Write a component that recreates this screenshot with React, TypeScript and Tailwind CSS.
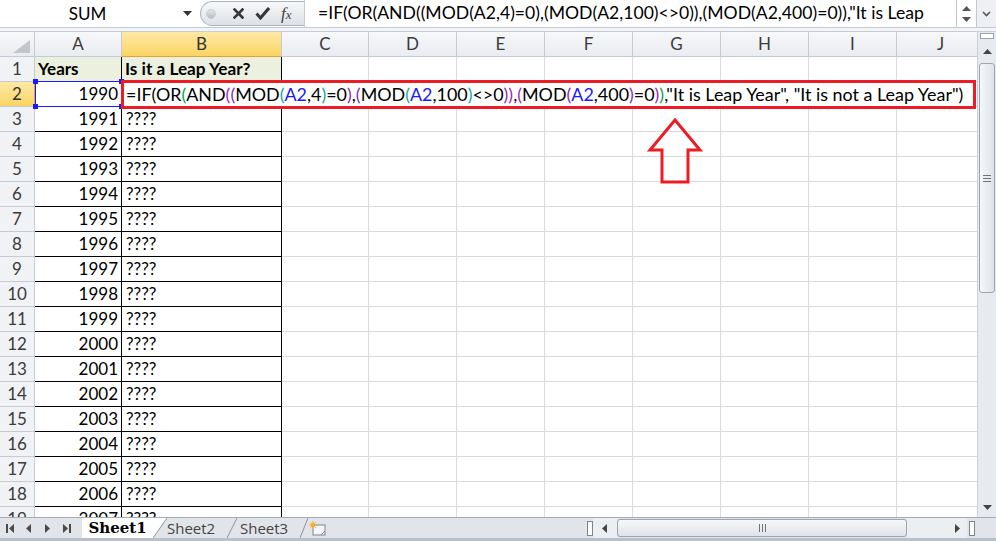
import React from 'react';

type Dir = 'up' | 'down' | 'left' | 'right';

const Tri = ({ dir, className }: { dir: Dir; className?: string }) => {
  const vertical = dir === 'up' || dir === 'down';
  const w = vertical ? 9 : 5;
  const h = vertical ? 5 : 9;
  const pts = {
    up: '0,5 4.5,0 9,5',
    down: '0,0 9,0 4.5,5',
    left: '5,0 5,9 0,4.5',
    right: '0,0 0,9 5,4.5',
  }[dir];
  return (
    <svg width={w} height={h} viewBox={`0 0 ${w} ${h}`} className={className}>
      <polygon points={pts} fill="currentColor" />
    </svg>
  );
};

const cols = [
  { l: 'A', w: 'w-[87px]' },
  { l: 'B', w: 'w-[160px]' },
  { l: 'C', w: 'w-[87px]' },
  { l: 'D', w: 'w-[88px]' },
  { l: 'E', w: 'w-[88px]' },
  { l: 'F', w: 'w-[88px]' },
  { l: 'G', w: 'w-[88px]' },
  { l: 'H', w: 'w-[88px]' },
  { l: 'I', w: 'w-[88px]' },
  { l: 'J', w: 'w-[88px]' },
];

const K = '#000000';
const GRN = '#00a651';
const PUR = '#a21cc4';
const PUR2 = '#8a2bb0';
const TEAL = '#12a89a';
const REF = '#1a1aff';

const formula: [string, string][] = [
  ['=IF(OR', K],
  ['(', GRN],
  ['AND', K],
  ['(', PUR],
  ['(', PUR2],
  ['MOD', K],
  ['(', TEAL],
  ['A2', REF],
  [',4', K],
  [')', TEAL],
  ['=0', K],
  [')', PUR2],
  [',', K],
  ['(', PUR2],
  ['MOD', K],
  ['(', TEAL],
  ['A2', REF],
  [',100', K],
  [')', TEAL],
  ['<>0', K],
  [')', PUR2],
  [')', PUR],
  [',', K],
  ['(', PUR],
  ['MOD', K],
  ['(', PUR2],
  ['A2', REF],
  [',400', K],
  [')', PUR2],
  ['=0', K],
  [')', PUR],
  [')', GRN],
  [',"It is Leap Year", "It is not a Leap Year")', K],
];

const years = Array.from({ length: 18 }, (_, i) => 1990 + i);

function FormulaBar() {
  return (
    <div className="flex h-[28px] bg-white border-b border-[#c3c9d1]">
      <div className="w-[200px] shrink-0 flex items-center">
        <div className="w-[175px] text-center text-[17px] text-black">SUM</div>
        <Tri dir="down" className="ml-[8px] text-[#333]" />
      </div>
      <div className="w-[104px] shrink-0 my-[1px] rounded-l-full border border-r-0 border-[#a9b2bd] bg-linear-to-b from-[#f7f8fa] to-[#dde1e6] flex items-center">
        <div className="ml-[5px] w-[10px] h-[10px] rounded-full bg-linear-to-b from-[#e4e6e9] to-[#b9bdc3] border border-[#c9cdd2]" />
        <svg width="11" height="11" viewBox="0 0 11 11" className="ml-[17px]">
          <path d="M1.5 1.5 L9.5 9.5 M9.5 1.5 L1.5 9.5" stroke="#363636" strokeWidth="2.6" strokeLinecap="square" />
        </svg>
        <svg width="15" height="13" viewBox="0 0 15 13" className="ml-[11px]">
          <path d="M1.5 6.5 L5.5 11 L14 1" stroke="#363636" strokeWidth="3" fill="none" />
        </svg>
        <div className="ml-[11px] text-[17px] leading-none text-[#444] font-['Liberation_Serif',serif] italic">
          f<span className="text-[13px]">x</span>
        </div>
      </div>
      <div className="flex-1 min-w-0 border-l border-[#c3c9d1] flex items-center pl-[13px] text-[17.6px] text-black whitespace-nowrap overflow-hidden">
        =IF(OR(AND((MOD(A2,4)=0),(MOD(A2,100)&lt;&gt;0)),(MOD(A2,400)=0)),"It is Leap
      </div>
      <div className="w-[20px] shrink-0 border-l border-[#c3c9d1] flex flex-col items-center justify-center gap-[6px] text-[#555]">
        <Tri dir="up" />
        <Tri dir="down" />
      </div>
      <div className="w-[20px] shrink-0 border-l border-[#c3c9d1] bg-[#eef0f3] flex items-center justify-center">
        <svg width="9" height="6" viewBox="0 0 9 6">
          <path d="M1 1 L4.5 4.5 L8 1" stroke="#555" strokeWidth="1.6" fill="none" />
        </svg>
      </div>
    </div>
  );
}

function HeaderRow() {
  return (
    <div className="flex h-[25px] shrink-0">
      <div className="w-[35px] shrink-0 relative border-r border-b border-[#c5cbd3] bg-linear-to-b from-[#f7f8fa] to-[#e9ecf0]">
        <svg width="17" height="13" viewBox="0 0 17 13" className="absolute right-[4px] bottom-[3px]">
          <polygon points="17,0 17,13 0,13" fill="#c2c6cc" />
        </svg>
      </div>
      {cols.map((c) => (
        <div
          key={c.l}
          className={
            c.l === 'B'
              ? `${c.w} shrink-0 flex items-center justify-center border-r border-b border-[#c5cbd3] border-b-[#e3a03c] bg-linear-to-b from-[#fde9a4] to-[#fbd462] text-[17px] text-[#333]`
              : `${c.w} shrink-0 flex items-center justify-center border-r border-b border-[#c5cbd3] bg-linear-to-b from-[#f7f8fa] to-[#e9ecf0] text-[17px] text-[#3b3b3b]`
          }
        >
          {c.l}
        </div>
      ))}
    </div>
  );
}

function DataRow({ r }: { r: number }) {
  const selected = r === 2;
  const year = r >= 2 ? String(years[r - 2]) : 'Years';
  const b = r === 1 ? 'Is it a Leap Year?' : r === 2 ? '' : '????';
  return (
    <div className="flex h-[25px] shrink-0">
      <div
        className={
          selected
            ? 'w-[35px] shrink-0 flex items-center justify-center border-r border-b border-[#c5cbd3] border-r-[#e3a03c] bg-linear-to-b from-[#fde9a4] to-[#fbd462] text-[17px] text-[#333]'
            : 'w-[35px] shrink-0 flex items-center justify-center border-r border-b border-[#c5cbd3] bg-[#f0f2f5] text-[17px] text-[#3b3b3b]'
        }
      >
        {r}
      </div>
      <div
        className={
          r === 1
            ? 'w-[87px] shrink-0 flex items-center border-r border-b border-black bg-[#ebf1de] pl-[3px] font-bold text-[17px]'
            : 'w-[87px] shrink-0 flex items-center justify-end border-r border-b border-black pr-[3px] text-[17px]'
        }
      >
        {year}
      </div>
      <div
        className={
          r === 1
            ? 'w-[160px] shrink-0 flex items-center border-r border-b border-black bg-[#ebf1de] pl-[3px] font-bold text-[17.2px] whitespace-nowrap overflow-hidden'
            : 'w-[160px] shrink-0 flex items-center border-r border-b border-black pl-[4px] text-[17px]'
        }
      >
        {b}
      </div>
      {cols.slice(2).map((c) => (
        <div key={c.l} className={`${c.w} shrink-0 border-r border-b border-[#d9dcdf]`} />
      ))}
    </div>
  );
}

function VScroll() {
  return (
    <div className="w-[19px] shrink-0 flex flex-col items-stretch bg-[#e7eaee] border-l border-[#cdd2d8]">
      <div className="h-[6px] mx-[2px] mt-[1px] border border-[#9aa3ae] bg-white" />
      <div className="h-[24px] flex items-center justify-center text-[#444]">
        <Tri dir="up" />
      </div>
      <div className="h-[230px] mx-[1px] rounded-[3px] border border-[#9ca5b0] bg-linear-to-r from-[#f6f7f9] to-[#dfe3e8] flex flex-col items-center justify-center gap-[2px]">
        <div className="w-[8px] h-[1px] bg-[#6b737d]" />
        <div className="w-[8px] h-[1px] bg-[#6b737d]" />
        <div className="w-[8px] h-[1px] bg-[#6b737d]" />
      </div>
      <div className="flex-1" />
      <div className="h-[20px] flex items-center justify-center text-[#444]">
        <Tri dir="down" />
      </div>
    </div>
  );
}

function Slant({ w, fill }: { w: number; fill?: boolean }) {
  return (
    <svg width={w} height="20" viewBox={`0 0 ${w} 20`} className="shrink-0">
      {fill && <polygon points={`0,0 ${w},0 0,20`} fill="#ffffff" />}
      <line x1="0" y1="20" x2={w} y2="0" stroke="#8a939e" strokeWidth="1" />
    </svg>
  );
}

function TabBar() {
  return (
    <div className="flex h-[24px] bg-[#e1e5ea] border-t border-t-[#a3acb7] border-b-[3px] border-b-[#b9c0c9]">
      <div className="w-[82px] shrink-0 flex items-center text-[#4a4a4a]">
        <div className="w-[19px] flex items-center justify-center gap-[1px]">
          <div className="w-[2px] h-[9px] bg-[#4a4a4a]" />
          <Tri dir="left" />
        </div>
        <div className="w-[19px] flex items-center justify-center">
          <Tri dir="left" />
        </div>
        <div className="w-[19px] flex items-center justify-center">
          <Tri dir="right" />
        </div>
        <div className="w-[19px] flex items-center justify-center gap-[1px]">
          <Tri dir="right" />
          <div className="w-[2px] h-[9px] bg-[#4a4a4a]" />
        </div>
      </div>
      <div className="w-[71px] shrink-0 bg-white flex items-center justify-center pt-[1px] text-[15px] font-bold text-black font-['DejaVu_Serif',serif]">
        Sheet1
      </div>
      <Slant w={14} fill />
      <div className="w-[60px] shrink-0 flex items-center pt-[1px] text-[15px] text-[#444] font-['Open_Sans',sans-serif]">Sheet2</div>
      <Slant w={10} />
      <div className="w-[63px] shrink-0 flex items-center pl-[3px] pt-[1px] text-[15px] text-[#444] font-['Open_Sans',sans-serif]">Sheet3</div>
      <Slant w={8} />
      <div className="w-[19px] shrink-0 flex items-center justify-center">
        <svg width="17" height="15" viewBox="0 0 17 15">
          <rect x="4" y="4" width="12" height="10" fill="#f4f6f8" stroke="#7c8692" />
          <path d="M12 14 L16 10" stroke="#7c8692" />
          <circle cx="4" cy="4" r="2.2" fill="#f7a21b" />
          <path d="M4 0 V8 M0 4 H8 M1.2 1.2 L6.8 6.8 M6.8 1.2 L1.2 6.8" stroke="#f7b236" strokeWidth="1" />
        </svg>
      </div>
      <div className="w-[259px] shrink-0" />
      <div className="w-[7px] shrink-0 flex items-center justify-center">
        <div className="w-[6px] h-[15px] border border-[#7c8692] bg-white" />
      </div>
      <div className="w-[22px] shrink-0 flex items-center justify-center text-[#444] bg-[#eceff2]">
        <Tri dir="left" />
      </div>
      <div className="w-[2px] shrink-0 bg-[#eceff2]" />
      <div className="w-[290px] shrink-0 my-[1px] rounded-[3px] border border-[#9ca5b0] bg-linear-to-b from-[#f6f7f9] to-[#dfe3e8] flex items-center justify-center gap-[2px]">
        <div className="w-[1px] h-[8px] bg-[#6b737d]" />
        <div className="w-[1px] h-[8px] bg-[#6b737d]" />
        <div className="w-[1px] h-[8px] bg-[#6b737d]" />
      </div>
      <div className="w-[40px] shrink-0 bg-[#eceff2]" />
      <div className="w-[20px] shrink-0 flex items-center justify-center text-[#444] bg-[#eceff2]">
        <Tri dir="right" />
      </div>
      <div className="w-[9px] shrink-0 flex items-center justify-center">
        <div className="w-[6px] h-[15px] border border-[#7c8692] bg-white" />
      </div>
      <div className="w-[20px] shrink-0" />
    </div>
  );
}

export default function App() {
  return (
    <div className="w-[996px] h-[541px] overflow-hidden bg-[#e1e5ea] font-['Lato',sans-serif] text-black">
      <FormulaBar />
      <div className="h-[4px] bg-[#f2f4f7] border-b border-[#c9ced6]" />
      <div className="flex h-[485px]">
        <div className="w-[977px] shrink-0 relative overflow-hidden bg-white flex flex-col">
          <HeaderRow />
          {Array.from({ length: 19 }, (_, i) => (
            <DataRow key={i} r={i + 1} />
          ))}

          {/* range reference highlight on A2 */}
          <div className="absolute left-[35px] top-[49px] w-[87px] h-[26px] border border-[#1a1aff]">
            <div className="absolute -left-[3px] -top-[3px] w-[5px] h-[5px] bg-[#1a1aff]" />
            <div className="absolute -right-[3px] -top-[3px] w-[5px] h-[5px] bg-[#1a1aff]" />
            <div className="absolute -left-[3px] -bottom-[3px] w-[5px] h-[5px] bg-[#1a1aff]" />
            <div className="absolute -right-[3px] -bottom-[3px] w-[5px] h-[5px] bg-[#1a1aff]" />
          </div>

          {/* in-cell edit box */}
          <div className="absolute left-[121px] top-[48px] w-[855px] h-[29px] border-[3px] border-[#ed1c24] bg-white flex items-center pl-[2px] text-[17.9px] whitespace-nowrap overflow-hidden">
            {formula.map(([t, c], i) => (
              <span key={i} style={{ color: c }}>
                {t}
              </span>
            ))}
          </div>

          {/* callout arrow */}
          <svg width="56" height="68" viewBox="0 0 56 68" className="absolute left-[647px] top-[86px]">
            <polygon points="28,2 53,32 41,32 41,64 15,64 15,32 3,32" fill="none" stroke="#ed1c24" strokeWidth="3" />
          </svg>
        </div>
        <VScroll />
      </div>
      <TabBar />
    </div>
  );
}
